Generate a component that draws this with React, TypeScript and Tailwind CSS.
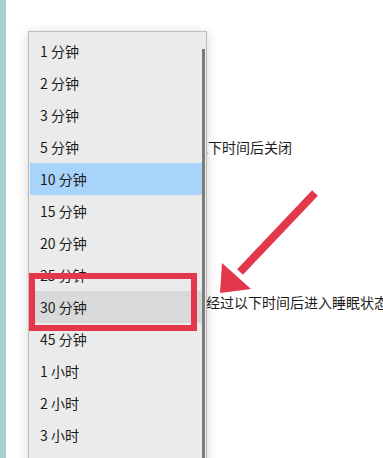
const items = [
  "1 分钟",
  "2 分钟",
  "3 分钟",
  "5 分钟",
  "10 分钟",
  "15 分钟",
  "20 分钟",
  "25 分钟",
  "30 分钟",
  "45 分钟",
  "1 小时",
  "2 小时",
  "3 小时",
];

const font = { fontFamily: '"Noto Sans CJK SC", "Noto Sans", sans-serif' };

export default function App() {
  return (
    <div
      className="relative flex h-[458px] w-[383px] overflow-hidden bg-white text-[14px] text-[#1b1b1b]"
      style={font}
    >
      {/* window edge */}
      <div className="w-[6px] shrink-0 bg-[#a9cdd1]" />

      {/* settings text behind the menu */}
      <div className="flex flex-col whitespace-nowrap pl-[160px]">
        <div className="mt-[137px] h-[20px] leading-[20px]">经过以下时间后关闭</div>
        <div className="mt-[135px] ml-[26px] h-[20px] leading-[20px]">，经过以下时间后进入睡眠状态</div>
      </div>

      {/* dropdown menu */}
      <div className="absolute left-[28px] top-[31px] h-[440px] w-[179px] border border-[#bcbcbc] bg-[#ebebeb] pt-[3px] shadow-[0_2px_10px_rgba(0,0,0,0.18)]">
        <div className="absolute right-[1px] top-[17px] bottom-0 w-[3px] bg-[#7b7b7b]" />
        <ul className="mr-[4px] ml-[1px] flex flex-col">
          {items.map((label, i) => (
            <li
              key={label}
              className={
                "flex h-[32px] items-center pl-[10px] " +
                (i === 4 ? "bg-[#a8d3fa]" : i === 8 ? "bg-[#d9d9d9]" : "")
              }
            >
              {label}
            </li>
          ))}
        </ul>
      </div>

      {/* annotation: red box */}
      <div className="absolute left-[29px] top-[273px] h-[58px] w-[168px] border-[6px] border-[#e3374b]" />

      {/* annotation: arrow */}
      <svg className="pointer-events-none absolute left-0 top-0" width="383" height="458" viewBox="0 0 383 458">
        <line x1="315" y1="193" x2="240" y2="272" stroke="#e3374b" strokeWidth="8" strokeLinecap="butt" />
        <polygon points="220,293 222,263 251,289" fill="#e3374b" />
      </svg>
    </div>
  );
}
